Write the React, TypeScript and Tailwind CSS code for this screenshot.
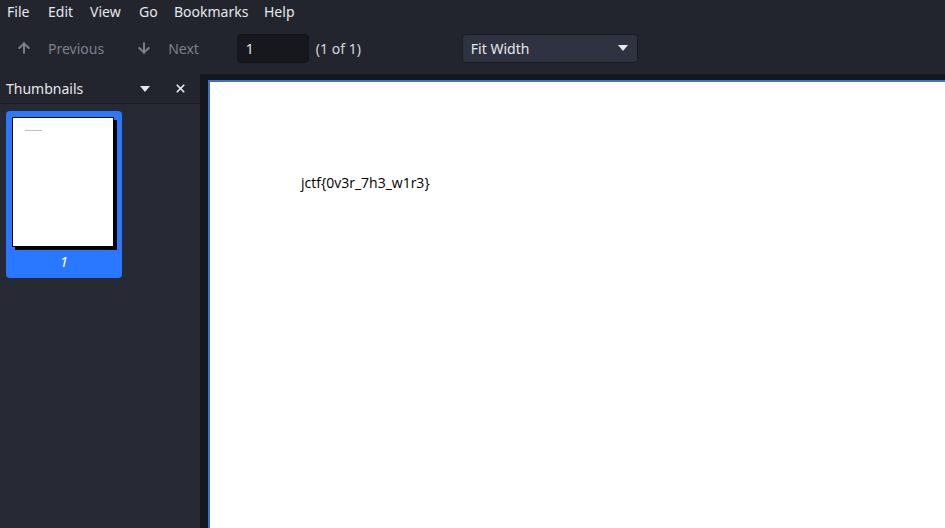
import React from "react";
import { ArrowUp, ArrowDown, X } from "lucide-react";

const ui = { fontFamily: '"Noto Sans", "Open Sans", sans-serif' };

function Caret({ className }: { className?: string }) {
  return (
    <svg width="10" height="6" viewBox="0 0 10 6" className={className}>
      <path d="M0 0h10L5 6z" fill="currentColor" />
    </svg>
  );
}

// widths taken so each label starts where the reference has it
const menus = [
  { label: "File", w: "w-[41px]" },
  { label: "Edit", w: "w-[42px]" },
  { label: "View", w: "w-[49px]" },
  { label: "Go", w: "w-[35px]" },
  { label: "Bookmarks", w: "w-[90px]" },
  { label: "Help", w: "w-[40px]" },
];

export default function App() {
  return (
    <div
      className="w-[945px] h-[528px] overflow-hidden flex flex-col bg-[#23252e] text-[#e6e7ea]"
      style={ui}
    >
      {/* menu bar */}
      <div className="h-[22px] flex items-center pl-[7px] text-[14px]">
        {menus.map((m) => (
          <span key={m.label} className={m.w}>
            {m.label}
          </span>
        ))}
      </div>

      {/* toolbar */}
      <div className="h-[52px] flex items-center text-[14px]">
        <div className="flex items-center text-[#7d808b] ml-[16px]">
          <ArrowUp size={16} strokeWidth={3} />
          <span className="ml-[16px]">Previous</span>
        </div>
        <div className="flex items-center text-[#7d808b] ml-[32px]">
          <ArrowDown size={16} strokeWidth={3} />
          <span className="ml-[16px]">Next</span>
        </div>
        <div className="ml-[38px] w-[72px] h-[29px] rounded-[4px] bg-[#17181d] border border-[#14151a] flex items-center pl-[8px]">
          1
        </div>
        <span className="ml-[7px] text-[#d7d8dc]">(1 of 1)</span>
        <div className="ml-[101px] w-[176px] h-[29px] rounded-[4px] bg-[#2f3240] border border-[#1a1b21] flex items-center justify-between pl-[8px] pr-[9px]">
          <span>Fit Width</span>
          <Caret className="text-[#e6e7ea]" />
        </div>
      </div>

      {/* main */}
      <div className="flex-1 flex min-h-0">
        <div className="w-[200px] flex flex-col bg-[#272934]">
          <div className="h-[30px] flex items-center pl-[6px] pr-[13px] border-b border-[#1a1b21] bg-[#23252e] text-[14px]">
            <span className="flex-1">Thumbnails</span>
            <Caret className="text-[#e6e7ea] mr-[24px]" />
            <X size={13} strokeWidth={3.2} />
          </div>
          <div className="pt-[7px] pl-[6px]">
            <div className="w-[116px] h-[167px] rounded-[4px] bg-[#2a78ff] flex flex-col items-start pt-[6px] pl-[6px]">
              <div className="relative w-[102px] h-[130px] bg-white border border-black shadow-[3px_3px_0_#000]">
                <div className="absolute left-[12px] top-[12px] w-[17px] h-[1px] bg-[#bbb]" />
              </div>
              <div className="w-[104px] text-center italic text-[15px] text-white mt-[3px]">1</div>
            </div>
          </div>
        </div>
        <div className="flex-1 min-w-0 bg-[#16171c] pl-[8px] pt-[6px] overflow-hidden">
          <div className="h-full w-[760px] bg-white border-l-2 border-t-2 border-[#3b6fc9] pt-[88px] pl-[91px]">
            <span
              className="text-[14px] text-black"
              style={{ fontFamily: '"Open Sans", "Noto Sans", sans-serif' }}
            >
              jctf{"{"}0v3r_7h3_w1r3{"}"}
            </span>
          </div>
        </div>
      </div>
    </div>
  );
}
